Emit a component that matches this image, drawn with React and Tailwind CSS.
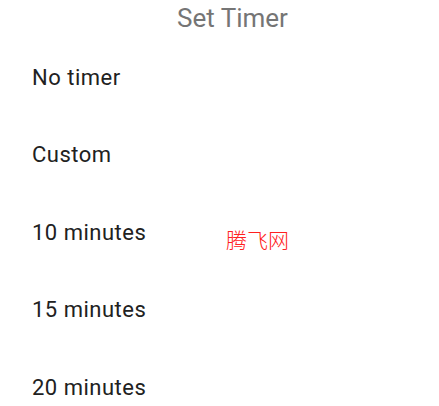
import React from "react";

const options = ["No timer", "Custom", "10 minutes", "15 minutes", "20 minutes"];

export default function App() {
  return (
    <div
      className="relative w-[439px] h-[406px] overflow-hidden bg-white"
      style={{ fontFamily: "Roboto, 'Noto Sans', sans-serif" }}
    >
      {/* Dialog title */}
      <div className="h-[39px] pt-[3px] pl-[177px]">
        <h1 className="text-[26px] leading-[30px] text-[#757575]">Set Timer</h1>
      </div>

      {/* Options */}
      <ul className="flex flex-col">
        {options.map((opt) => (
          <li
            key={opt}
            className="h-[77.5px] flex items-center pl-[32px] text-[22px] leading-[26px] tracking-[0.5px] text-[#212121]"
          >
            {opt}
          </li>
        ))}
      </ul>

      {/* Watermark */}
      <div
        className="absolute left-[226px] top-[226px] text-[21px] leading-[26px] text-[#ff2020] font-light"
        style={{ fontFamily: "'Noto Sans CJK SC', sans-serif" }}
      >
        腾飞网
      </div>
    </div>
  );
}
